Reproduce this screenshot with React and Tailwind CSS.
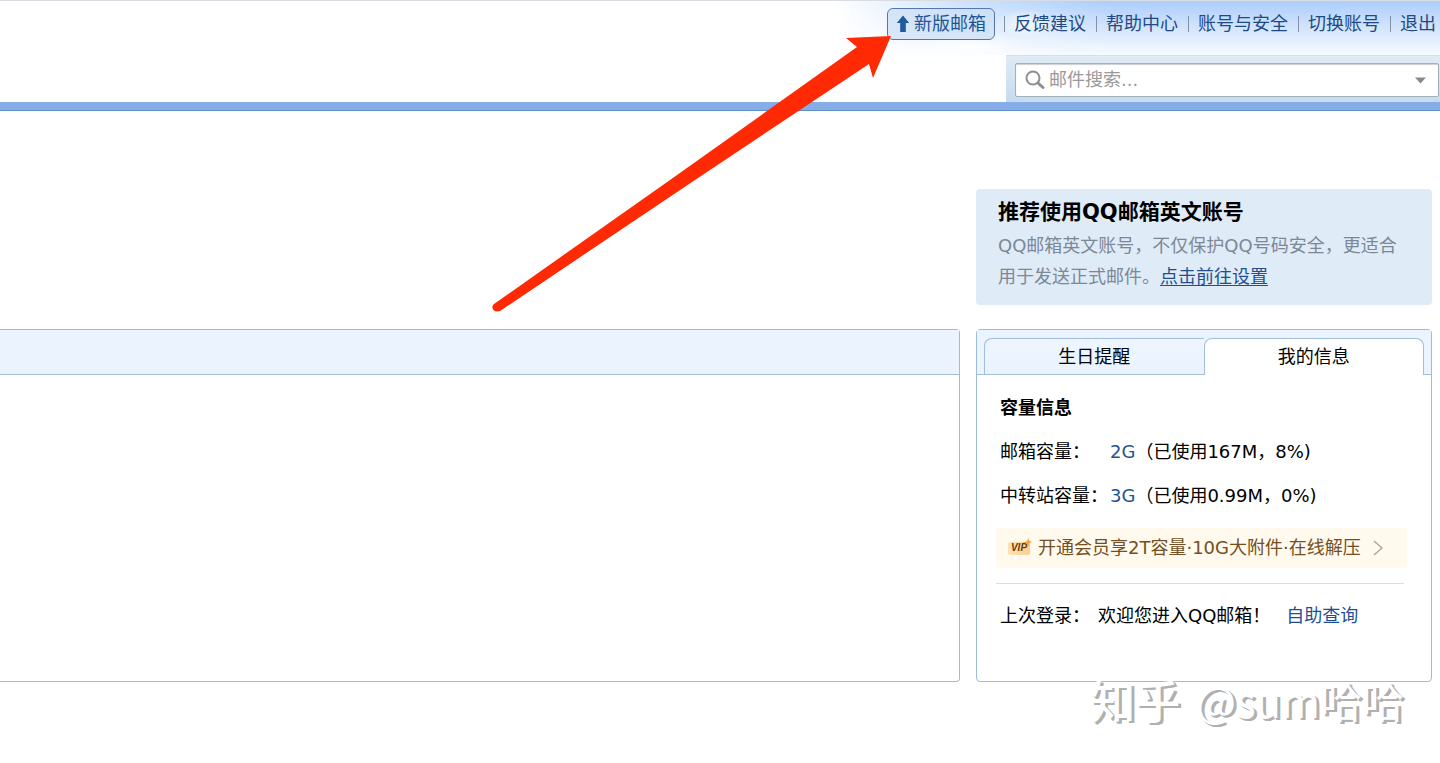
import { useState } from "react"

const navLinks = ["反馈建议", "帮助中心", "账号与安全", "切换账号", "退出"]

const TopNav = () => (
  <nav className="flex h-[46px] items-center justify-end pr-1 text-lg text-[#1e4a86]">
    <a
      href="#new"
      className="mr-[9px] flex h-8 items-center gap-1 rounded-md border border-[#5577ae] bg-[#cbdef5]/70 px-2 text-[#1e5494]"
    >
      <svg width="14" height="18" viewBox="0 0 14 18" aria-hidden="true">
        <path d="M7 0.5 L13.2 8 H9.8 V17 H4.2 V8 H0.8 Z" fill="#1f5a9e" />
      </svg>
      新版邮箱
    </a>
    <ul className="flex items-center gap-2.5">
      {navLinks.map((label) => (
        <li key={label} className="flex items-center gap-[9px]">
          <span className="h-4 w-px bg-[#8491a5]" />
          <a href="#nav">{label}</a>
        </li>
      ))}
    </ul>
  </nav>
)

const SearchBar = () => {
  const [keyword, setKeyword] = useState("")

  return (
    <form
      onSubmit={(e) => e.preventDefault()}
      className="ml-auto h-[47px] w-[434px] border-t border-[#d3dfec] bg-linear-to-b from-[#dfebf5] to-[#c6dbf0] pl-[9px] pr-px pt-[7px]"
    >
      <div className="flex h-[34px] items-center rounded-xs border border-[#a3b0ba] bg-white pl-[9px] pr-3 shadow-[inset_0_1px_1px_#c9cfd4]">
        <svg width="20" height="20" viewBox="0 0 20 20" fill="none" stroke="#8e8e8e" aria-hidden="true">
          <circle cx="8" cy="8" r="6.5" strokeWidth="2" />
          <path d="M13 13 L18 17.5" strokeWidth="3" strokeLinecap="round" />
        </svg>
        <input
          type="text"
          aria-label="邮件搜索"
          value={keyword}
          onChange={(e) => setKeyword(e.target.value)}
          placeholder="邮件搜索..."
          className="ml-1 min-w-0 flex-1 bg-transparent text-lg leading-7 text-black outline-none placeholder:text-[#999999]"
        />
        <button type="button" aria-label="搜索选项">
          <svg width="11" height="7" viewBox="0 0 11 7" aria-hidden="true">
            <path d="M0 0.5 H11 L5.5 6.5 Z" fill="#8a8a8a" />
          </svg>
        </button>
      </div>
    </form>
  )
}

const Header = () => (
  <header className="border-t border-t-[#d9dde3]">
    <div className="relative h-[101px]">
      {/* sky, with two faint clouds near the first links */}
      <div className="absolute right-0 top-0 h-[54px] w-[650px] bg-[radial-gradient(ellipse_30px_14px_at_236px_22px,rgba(255,255,255,0.7),transparent),radial-gradient(ellipse_60px_16px_at_180px_46px,rgba(255,255,255,0.8),transparent),linear-gradient(to_bottom,#abcdfd,#d3e5fc_50%,#f6faff)] [mask-image:linear-gradient(78deg,transparent_8%,rgba(0,0,0,0.6)_28%,black_50%)]" />
      <div className="relative">
        <TopNav />
        <div className="h-2" />
        <SearchBar />
      </div>
    </div>
    <div className="h-[9px] border-b border-[#5f8fc7] bg-[#86ade6]" />
  </header>
)

const Tip = () => (
  <section className="rounded-sm bg-[#e0ebf8] pb-[13px] pl-[22px] pr-6 pt-[7px]">
    <h2 className="text-[21px] font-bold leading-8 text-black">推荐使用QQ邮箱英文账号</h2>
    <p className="mt-0.5 text-lg leading-[31px] text-[#7c8896]">
      <span>QQ邮箱英文账号，不仅保护QQ号码安全，更适合</span>
      <span>用于发送正式邮件。</span>
      <a href="#setting" className="text-[#1d4f91] underline underline-offset-2">
        点击前往设置
      </a>
    </p>
  </section>
)

const VipBadge = () => (
  <span className="relative flex h-[13px] w-[22px] items-center justify-center rounded-xs bg-linear-to-r from-[#fde3b8] to-[#fbcf8a] font-['Liberation_Sans',sans-serif] text-[10px] font-bold italic leading-none text-[#6b3d10]">
    VIP
    <svg className="absolute -right-0.5 -top-1" width="9" height="9" viewBox="0 0 8 8" aria-hidden="true">
      <path d="M5 0 L5.6 2.6 L8 3.4 L5.6 4.6 L4.6 8 L3.4 4.8 L0 4 L3.4 2.8 Z" fill="#f5a53a" />
    </svg>
  </span>
)

const CapacityRow = ({ label, total, used }) => (
  <div className="flex h-11 items-center pl-1">
    <span className="w-[110px]">{label}：</span>
    <a href="#capacity" className="text-[#1e5494]">
      {total}
    </a>
    <span>（{used})</span>
  </div>
)

const InfoPanel = () => {
  const [tab, setTab] = useState("info")

  const tabClass = (name) =>
    tab === name
      ? "-mb-px rounded-t-lg border border-b-0 bg-white"
      : "rounded-tl-lg border-l border-t bg-linear-to-b from-[#eef5ff] to-[#e9f4ff]"

  return (
    <section className="rounded-sm border border-[#9dbcdc] bg-white text-lg text-black">
      <div role="tablist" className="flex h-[45px] border-b border-[#a3bddc] bg-[#eaf4fe] px-[7px] pt-2">
        <button
          type="button"
          role="tab"
          aria-selected={tab === "birthday"}
          onClick={() => setTab("birthday")}
          className={`flex-1 border-[#a3bddc] ${tabClass("birthday")}`}
        >
          生日提醒
        </button>
        <button
          type="button"
          role="tab"
          aria-selected={tab === "info"}
          onClick={() => setTab("info")}
          className={`flex-1 border-[#a3bddc] ${tabClass("info")}`}
        >
          我的信息
        </button>
      </div>

      <div className="pb-[43px] pl-[19px] pr-6 pt-[11px]">
        <h3 className="flex h-11 items-center pl-1 font-bold">容量信息</h3>
        <CapacityRow label="邮箱容量" total="2G" used="已使用167M，8%" />
        <CapacityRow label="中转站容量" total="3G" used="已使用0.99M，0%" />

        <a
          href="#vip"
          className="mt-2.5 flex h-10 items-center whitespace-nowrap bg-[#fff9ee] pl-3 text-[#735023]"
        >
          <VipBadge />
          <span className="ml-2">开通会员享2T容量·10G大附件·在线解压</span>
          <svg className="ml-3" width="10" height="16" viewBox="0 0 10 16" fill="none" aria-hidden="true">
            <path d="M1 1 L9 8 L1 15" stroke="#aaa69f" strokeWidth="1.4" />
          </svg>
        </a>

        <hr className="mr-[3px] mt-[15px] border-[#d3dfe8]" />

        <div className="mt-2.5 flex h-11 items-center pl-1">
          <span>上次登录：</span>
          <span className="ml-2">欢迎您进入QQ邮箱！</span>
          <a href="#query" className="ml-4 text-[#1e4f96]">
            自助查询
          </a>
        </div>
      </div>
    </section>
  )
}

// Red pointer towards the "新版邮箱" button
const Pointer = () => (
  <svg
    className="pointer-events-none absolute right-[548px] top-8"
    width="400"
    height="280"
    viewBox="0 0 400 280"
    aria-hidden="true"
  >
    <path
      d="M399 4 L354 6 L365 15 L178 148 L2 272 C-2 276 2 281 8 279 L203 148 L377 32 L381 46 Z"
      fill="#ff2a04"
    />
  </svg>
)

const App = () => {
  return (
    <div className="relative min-h-screen overflow-hidden bg-white font-['DejaVu_Sans','Noto_Sans_CJK_SC',sans-serif]">
      <Header />

      <main className="flex gap-4 pr-2 pt-[78px]">
        <div className="flex min-w-0 flex-1 flex-col">
          <div className="h-[140px]" />
          <section className="flex-1 rounded-r-sm border border-l-0 border-[#9dbcdc] bg-white">
            <div className="h-[45px] border-b border-[#a3bddc] bg-[#ebf4fe]" />
          </section>
        </div>
        <aside className="flex w-[456px] shrink-0 flex-col gap-6">
          <Tip />
          <InfoPanel />
        </aside>
      </main>

      <Pointer />
      <p className="pointer-events-none absolute right-9 top-[670px] flex items-center gap-4 font-['Noto_Sans_CJK_SC',sans-serif] text-[42px] leading-[60px] text-white [text-shadow:2px_2px_0_#b0b0b0,3px_2px_0_#b0b0b0]">
        <span className="text-[45px] font-medium">知乎</span>
        <span>@sum哈哈</span>
      </p>
    </div>
  )
}

export default App
